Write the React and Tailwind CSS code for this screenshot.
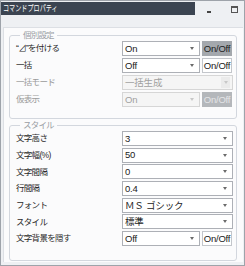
import React from 'react';

const font = { fontFamily: '"Liberation Sans", "Noto Sans CJK JP", sans-serif' };

function Arrow({ disabled }) {
  return (
    <svg width="4" height="3" viewBox="0 0 4 3" className="shrink-0">
      <path d="M0 0 H4 L2 3 Z" fill={disabled ? '#c8c8c8' : '#6b6b6b'} />
    </svg>
  );
}

function Select({ value, disabled, wide }) {
  return (
    <div
      className={`flex items-center justify-between shrink-0 h-full border pl-[2px] pr-[5px] ${
        wide ? 'w-[111px]' : 'w-[78px]'
      } ${
        disabled
          ? 'border-[#d6d6d6] bg-[#f5f5f5] text-[#a0a0a0]'
          : 'border-[#adb0b6] bg-white text-[#222]'
      }`}
    >
      <span className="text-[9.5px] leading-none tracking-[-0.2px]">{value}</span>
      {disabled && wide ? (
        <span className="flex items-center justify-center w-[9px] h-[11px] bg-[#ebebeb] -mr-[3px]">
          <Arrow disabled />
        </span>
      ) : (
        <Arrow disabled={disabled} />
      )}
    </div>
  );
}

function Toggle({ active, disabled }) {
  let cls = 'border border-[#c3c6cb] bg-white text-[#222]';
  if (active) cls = 'bg-[#a4a8ad] text-[#1e1e1e]';
  if (disabled) cls = 'bg-[#b4b7bb] text-[#e4e5e7]';
  return (
    <div className={`flex items-center justify-center shrink-0 overflow-hidden w-[30px] h-full text-[9.5px] leading-none tracking-[-0.2px] ${cls}`}>
      On/Off
    </div>
  );
}

function Row({ label, value, toggle, disabled }) {
  return (
    <div className="flex items-center h-[15px]">
      <div className={`w-[106px] shrink-0 text-[8.5px] leading-none tracking-[-0.7px] ${disabled ? 'text-[#9a9a9a]' : 'text-[#2a2a2a]'}`}>
        {label}
      </div>
      {toggle ? (
        <div className="flex h-full gap-[2px]">
          <Select value={value} disabled={disabled} />
          <Toggle active={toggle === 'active'} disabled={disabled} />
        </div>
      ) : (
        <Select value={value} disabled={disabled} wide />
      )}
    </div>
  );
}

function Group({ title, children, className }) {
  return (
    <fieldset className={`border border-[#d3d7de] rounded-[3px] pl-[6px] ${className}`}>
      <legend className="ml-[4px] px-[3px] text-[8.5px] leading-[10px] tracking-[-0.8px] text-[#9a9ea4]">{title}</legend>
      {children}
    </fieldset>
  );
}

export default function App() {
  return (
    <div className="w-[245px] h-[266px] bg-[#eef0f3] border border-[#9ea3aa] flex flex-col" style={font}>
      <div className="flex items-start h-[26px]">
        <div className="w-[194px] h-[13px] mt-[1px] bg-[#3b4451] flex items-center pl-[2px] overflow-hidden">
          <span className="text-[8.5px] leading-none text-white origin-left scale-x-[0.72] whitespace-nowrap">
            コマンドプロパティ
          </span>
        </div>
        <div className="w-[10px] h-[2px] ml-[10px] mt-[10px] px-[2px]">
          <div className="w-[4px] h-[1.5px] bg-[#444]" />
        </div>
        <div className="w-[7px] h-[7px] ml-[16px] mt-[5px] border border-[#555] border-t-2" />
      </div>
      <div className="flex-1 ml-[2px] mr-[1px] mb-[3px] bg-[#fbfbfc] border-t border-l border-[#dcdfe4] pl-[5px] pr-[6px] pt-[2px] flex flex-col gap-[1px]">
        <Group title="個別設定" className="pb-[11px]">
          <div className="flex flex-col gap-[2px] pt-[1px]">
            <Row label="“⊿”を付ける" value="On" toggle="active" />
            <Row label="一括" value="Off" toggle="plain" />
            <Row label="一括モード" value="一括生成" disabled />
            <Row label="仮表示" value="On" toggle="plain" disabled />
          </div>
        </Group>
        <Group title="スタイル" className="pb-[14px]">
          <div className="flex flex-col gap-[1.7px] pt-[1px]">
            <Row label="文字高さ" value="3" />
            <Row label="文字幅(%)" value="50" />
            <Row label="文字間隔" value="0" />
            <Row label="行間隔" value="0.4" />
            <Row label="フォント" value="ＭＳ ゴシック" />
            <Row label="スタイル" value="標準" />
            <Row label="文字背景を隠す" value="Off" toggle="plain" />
          </div>
        </Group>
      </div>
    </div>
  );
}
